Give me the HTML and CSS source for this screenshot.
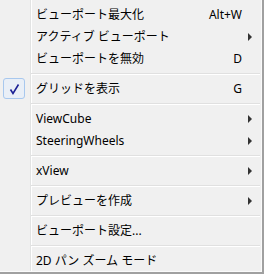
FILE: index.html
```html
<!DOCTYPE html>
<html lang="ja">
<head>
    <meta charset="UTF-8">
    <title>ビューポート メニュー</title>
    <link rel="stylesheet" href="styles.css">
</head>
<body>
    <div class="menu">
        <div class="item">
            <span class="icon"></span>
            <span class="label">ビューポート最大化</span>
            <span class="key">Alt+W</span>
            <span class="sub"></span>
        </div>
        <div class="item">
            <span class="icon"></span>
            <span class="label">アクティブ ビューポート</span>
            <span class="sub"><i class="arrow"></i></span>
        </div>
        <div class="item">
            <span class="icon"></span>
            <span class="label">ビューポートを無効</span>
            <span class="key">D</span>
            <span class="sub"></span>
        </div>
        <div class="sep"></div>
        <div class="item">
            <span class="icon">
                <span class="check">
                    <svg width="20" height="19" viewBox="0 0 20 19">
                        <polyline points="6.5,10.5 9,14.5 14.5,5.5" fill="none" stroke="#1c2195" stroke-width="1.6"/>
                    </svg>
                </span>
            </span>
            <span class="label">グリッドを表示</span>
            <span class="key">G</span>
            <span class="sub"></span>
        </div>
        <div class="sep"></div>
        <div class="item">
            <span class="icon"></span>
            <span class="label">ViewCube</span>
            <span class="sub"><i class="arrow"></i></span>
        </div>
        <div class="item">
            <span class="icon"></span>
            <span class="label">SteeringWheels</span>
            <span class="sub"><i class="arrow"></i></span>
        </div>
        <div class="sep"></div>
        <div class="item">
            <span class="icon"></span>
            <span class="label">xView</span>
            <span class="sub"><i class="arrow"></i></span>
        </div>
        <div class="sep"></div>
        <div class="item">
            <span class="icon"></span>
            <span class="label">プレビューを作成</span>
            <span class="sub"><i class="arrow"></i></span>
        </div>
        <div class="sep"></div>
        <div class="item">
            <span class="icon"></span>
            <span class="label">ビューポート設定...</span>
            <span class="sub"></span>
        </div>
        <div class="sep"></div>
        <div class="item">
            <span class="icon"></span>
            <span class="label">2D パン ズーム モード</span>
            <span class="sub"></span>
        </div>
    </div>
</body>
</html>
```

FILE: styles.css
```css
body {
    margin: 0;
    background: #f0f0f0;
}
.menu {
    width: 264px;
    height: 274px;
    box-sizing: border-box;
    padding-top: 4px;
    border-right: 2px solid #a0a0a0;
    border-bottom: 2px solid #a0a0a0;
    background-color: #f0f0f0;
    background-image: linear-gradient(to right, transparent 30px, #e2e3e3 30px, #e2e3e3 31px, #fff 31px, #fff 32px, transparent 32px);
    box-shadow: inset -1px -1px 0 #fafafa;
    font-family: "Noto Sans", "Noto Sans CJK JP", sans-serif;
    font-size: 12px;
    color: #000;
}
.item {
    display: flex;
    align-items: center;
    height: 22px;
    line-height: 22px;
}
.icon {
    width: 36px;
    height: 22px;
    flex: none;
}
.check {
    display: block;
    box-sizing: border-box;
    width: 22px;
    height: 21px;
    margin: 0 0 0 3px;
    border: 1px solid #a8c8ee;
    border-radius: 3px;
    background: #e9eff7;
}
.check svg {
    display: block;
}
.label {
    flex: 1;
    white-space: nowrap;
}
.key {
    flex: none;
}
.sub {
    width: 20px;
    height: 22px;
    flex: none;
    display: flex;
    align-items: center;
}
.arrow {
    display: block;
    width: 0;
    height: 0;
    margin-left: 6px;
    border-left: 4px solid #333;
    border-top: 4px solid transparent;
    border-bottom: 4px solid transparent;
}
.sep {
    height: 8px;
    margin: 0 2px 0 31px;
    background: linear-gradient(to bottom, transparent 3px, #e0e0e0 3px, #e0e0e0 4px, #fff 4px, #fff 5px, transparent 5px);
}
```
